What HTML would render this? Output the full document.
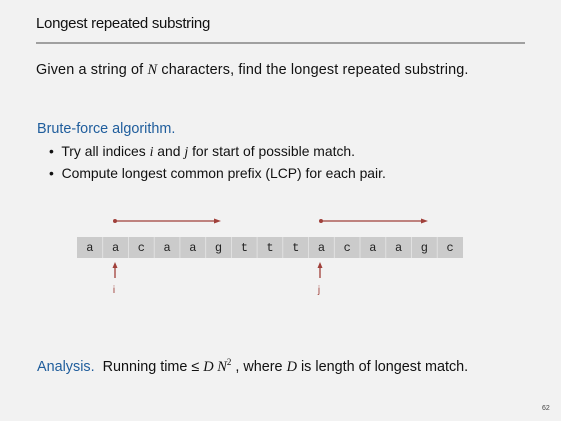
<!DOCTYPE html>
<html><head><meta charset="utf-8"><style>
html,body{margin:0;padding:0}
body{width:561px;height:421px;background:#f2f2f2;position:relative;overflow:hidden;font-family:"Liberation Sans",sans-serif;color:#111}
.t{position:absolute;white-space:nowrap;font-size:14.4px}
.b{color:#1f5d9c}
i.s{font-family:"Liberation Serif",serif}
</style></head><body>
<div class="t" style="left:36px;top:15px;font-size:15px;letter-spacing:-0.3px">Longest repeated substring</div>
<div style="position:absolute;left:36px;top:42px;width:489px;height:2px;background:#a0a0a0"></div>
<div class="t" style="left:36px;top:62px;letter-spacing:0.15px">Given a string of <i class="s">N</i> characters, find the longest repeated substring.</div>
<div class="t b" style="left:37px;top:121px">Brute-force algorithm.</div>
<div class="t" style="left:49px;top:143px;font-size:13.9px">•&nbsp; Try all indices <i class="s">i</i> and <i class="s">j</i> for start of possible match.</div>
<div class="t" style="left:49px;top:165px;font-size:13.9px">•&nbsp; Compute longest common prefix (LCP) for each pair.</div>
<svg style="position:absolute;left:0;top:0" width="561" height="421">
<g fill="#cbcbcb">
<rect x="77" y="237" width="386" height="21"/>
</g>
<g stroke="#e6e6e6" stroke-width="0.8">
<line x1="102.7" y1="237" x2="102.7" y2="258"/><line x1="128.5" y1="237" x2="128.5" y2="258"/><line x1="154.2" y1="237" x2="154.2" y2="258"/><line x1="179.9" y1="237" x2="179.9" y2="258"/><line x1="205.7" y1="237" x2="205.7" y2="258"/><line x1="231.4" y1="237" x2="231.4" y2="258"/><line x1="257.1" y1="237" x2="257.1" y2="258"/><line x1="282.8" y1="237" x2="282.8" y2="258"/><line x1="308.6" y1="237" x2="308.6" y2="258"/><line x1="334.3" y1="237" x2="334.3" y2="258"/><line x1="360" y1="237" x2="360" y2="258"/><line x1="385.8" y1="237" x2="385.8" y2="258"/><line x1="411.5" y1="237" x2="411.5" y2="258"/><line x1="437.2" y1="237" x2="437.2" y2="258"/>
</g>
<g font-family="Liberation Mono,monospace" font-size="12" fill="#222" text-anchor="middle">
<text x="89.9" y="251">a</text><text x="115.6" y="251">a</text><text x="141.3" y="251">c</text><text x="167.1" y="251">a</text><text x="192.8" y="251">a</text><text x="218.5" y="251">g</text><text x="244.3" y="251">t</text><text x="270" y="251">t</text><text x="295.7" y="251">t</text><text x="321.5" y="251">a</text><text x="347.2" y="251">c</text><text x="372.9" y="251">a</text><text x="398.6" y="251">a</text><text x="424.4" y="251">g</text><text x="450.1" y="251">c</text>
</g>
<g stroke="#a0403a" fill="#a0403a" stroke-width="1.3">
<circle cx="115" cy="221" r="2" stroke="none"/><line x1="115" y1="221" x2="216" y2="221"/><path d="M221 221 L214 218.5 L214 223.5Z" stroke="none"/>
<circle cx="321" cy="221" r="2" stroke="none"/><line x1="321" y1="221" x2="423" y2="221"/><path d="M428 221 L421 218.5 L421 223.5Z" stroke="none"/>
<line x1="115" y1="267" x2="115" y2="278"/><path d="M115 262 L112.5 268 L117.5 268Z" stroke="none"/>
<line x1="320" y1="267" x2="320" y2="278"/><path d="M320 262 L317.5 268 L322.5 268Z" stroke="none"/>
</g>
<g font-family="Liberation Sans,sans-serif" font-size="10" fill="#a0403a" text-anchor="middle">
<text x="114" y="293">i</text><text x="319" y="293">j</text>
</g>
</svg>
<div class="t" style="left:37px;top:357px"><span class="b">Analysis.</span>&nbsp; Running time ≤ <i class="s">D N</i><sup style="font-size:9px;font-family:'Liberation Serif',serif">2</sup> , where <i class="s">D</i> is length of longest match.</div>
<div class="t" style="left:542px;top:405px;font-size:7px;color:#444">62</div>
</body></html>
